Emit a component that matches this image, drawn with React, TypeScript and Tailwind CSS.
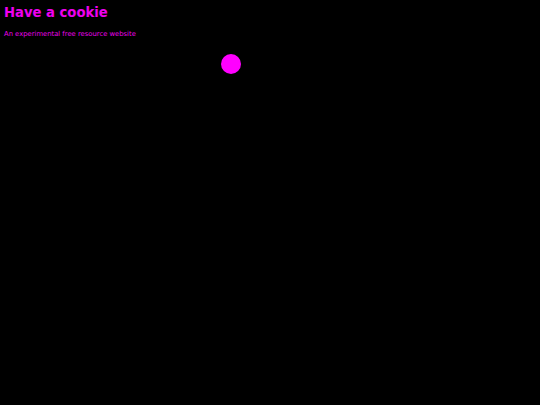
export default function App() {
  return (
    <div
      className="min-h-screen w-full bg-black px-[4px] pt-[4px] text-[#ee00ee]"
      style={{ fontFamily: '"DejaVu Sans", sans-serif' }}
    >
      <h1 className="text-[13.2px] font-bold leading-[17px]">Have a cookie</h1>
      <p className="mt-[9px] text-[6.8px] leading-[9px]">An experimental free resource website</p>
      <div className="mt-[15px] ml-[217px] h-[20px] w-[20px] rounded-full bg-[#ff00ff]" />
    </div>
  );
}
